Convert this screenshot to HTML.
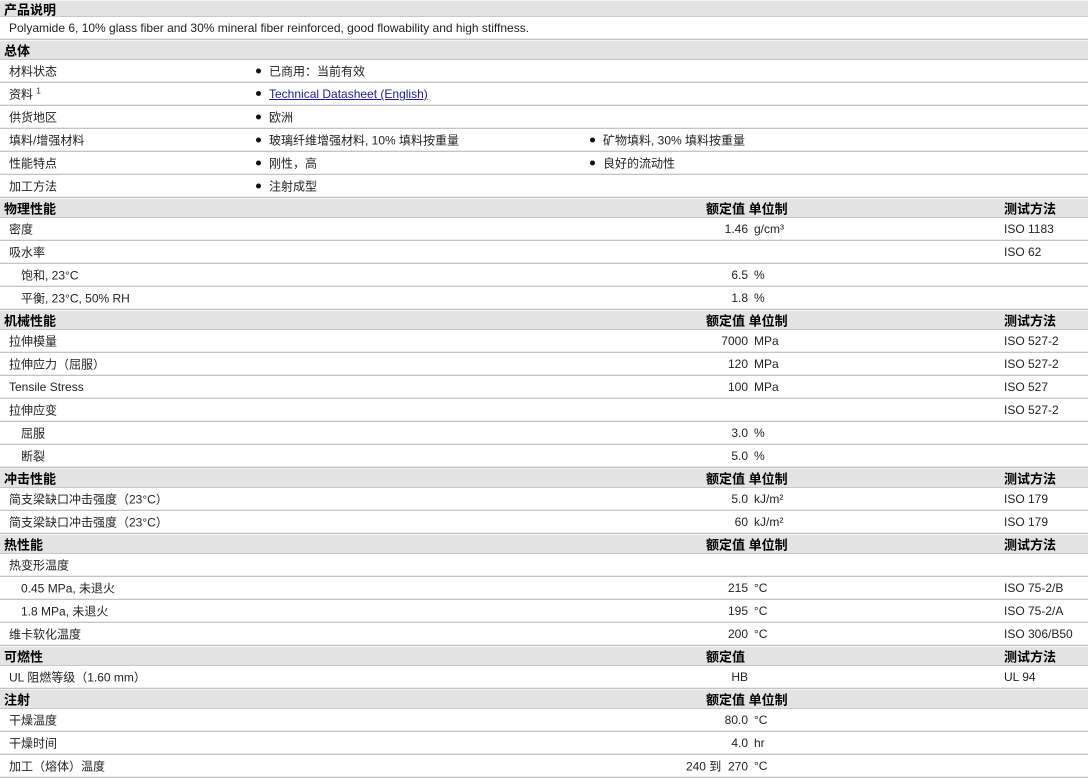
<!DOCTYPE html>
<html><head><meta charset="utf-8"><style>
*{margin:0;padding:0;box-sizing:border-box}
body{width:1088px;height:775px;overflow:hidden;background:#fff;font-family:"Liberation Sans","Noto Sans CJK SC",sans-serif;font-size:12px;color:#222}
.r{position:relative;height:23px;border-bottom:1px solid #c4c4c4;box-shadow:inset 0 -1px 0 #ececec}
.h{position:relative;height:20px;background:#e3e3e3;border-bottom:1px solid #c8c8c8;border-top:1px solid #f4f4f4;font-weight:bold;color:#000;font-size:13px}
.h span,.r span{position:absolute;top:50%;transform:translateY(-50%);white-space:nowrap}
.l{left:9px}.l2{left:21px}.hl{left:4px}
.v{right:340px;text-align:right}
.u{left:754px}
.t{left:1004px}
.b1{left:256px}.b2{left:590px}
.hv{left:706px}.ht{left:1004px}
a{color:#1a1aa6;text-decoration:underline}
.dot{display:inline-block;width:5px;height:5px;border-radius:50%;background:#111;margin-right:8px;vertical-align:middle;position:relative;top:-1px}
</style></head><body>
<div class="h" style="height:17px"><span class="hl">产品说明</span></div>
<div class="r"><span class="l">Polyamide 6, 10% glass fiber and 30% mineral fiber reinforced, good flowability and high stiffness.</span></div>
<div class="h"><span class="hl">总体</span></div>
<div class="r"><span class="l">材料状态</span><span class="b1"><i class="dot"></i>已商用：当前有效</span></div>
<div class="r"><span class="l">资料 <sup style="font-size:8px">1</sup></span><span class="b1"><i class="dot"></i><a>Technical Datasheet (English)</a></span></div>
<div class="r"><span class="l">供货地区</span><span class="b1"><i class="dot"></i>欧洲</span></div>
<div class="r"><span class="l">填料/增强材料</span><span class="b1"><i class="dot"></i>玻璃纤维增强材料, 10% 填料按重量</span><span class="b2"><i class="dot"></i>矿物填料, 30% 填料按重量</span></div>
<div class="r"><span class="l">性能特点</span><span class="b1"><i class="dot"></i>刚性，高</span><span class="b2"><i class="dot"></i>良好的流动性</span></div>
<div class="r"><span class="l">加工方法</span><span class="b1"><i class="dot"></i>注射成型</span></div>

<div class="h"><span class="hl">物理性能</span><span class="hv">额定值 单位制</span><span class="ht">测试方法</span></div>
<div class="r"><span class="l">密度</span><span class="v">1.46</span><span class="u">g/cm³</span><span class="t">ISO 1183</span></div>
<div class="r"><span class="l">吸水率</span><span class="t">ISO 62</span></div>
<div class="r"><span class="l2">饱和, 23°C</span><span class="v">6.5</span><span class="u">%</span></div>
<div class="r"><span class="l2">平衡, 23°C, 50% RH</span><span class="v">1.8</span><span class="u">%</span></div>

<div class="h"><span class="hl">机械性能</span><span class="hv">额定值 单位制</span><span class="ht">测试方法</span></div>
<div class="r"><span class="l">拉伸模量</span><span class="v">7000</span><span class="u">MPa</span><span class="t">ISO 527-2</span></div>
<div class="r"><span class="l">拉伸应力（屈服）</span><span class="v">120</span><span class="u">MPa</span><span class="t">ISO 527-2</span></div>
<div class="r"><span class="l">Tensile Stress</span><span class="v">100</span><span class="u">MPa</span><span class="t">ISO 527</span></div>
<div class="r"><span class="l">拉伸应变</span><span class="t">ISO 527-2</span></div>
<div class="r"><span class="l2">屈服</span><span class="v">3.0</span><span class="u">%</span></div>
<div class="r"><span class="l2">断裂</span><span class="v">5.0</span><span class="u">%</span></div>

<div class="h"><span class="hl">冲击性能</span><span class="hv">额定值 单位制</span><span class="ht">测试方法</span></div>
<div class="r"><span class="l">简支梁缺口冲击强度（23°C）</span><span class="v">5.0</span><span class="u">kJ/m²</span><span class="t">ISO 179</span></div>
<div class="r"><span class="l">简支梁缺口冲击强度（23°C）</span><span class="v">60</span><span class="u">kJ/m²</span><span class="t">ISO 179</span></div>

<div class="h"><span class="hl">热性能</span><span class="hv">额定值 单位制</span><span class="ht">测试方法</span></div>
<div class="r"><span class="l">热变形温度</span></div>
<div class="r"><span class="l2">0.45 MPa, 未退火</span><span class="v">215</span><span class="u">°C</span><span class="t">ISO 75-2/B</span></div>
<div class="r"><span class="l2">1.8 MPa, 未退火</span><span class="v">195</span><span class="u">°C</span><span class="t">ISO 75-2/A</span></div>
<div class="r"><span class="l">维卡软化温度</span><span class="v">200</span><span class="u">°C</span><span class="t">ISO 306/B50</span></div>

<div class="h"><span class="hl">可燃性</span><span class="hv">额定值</span><span class="ht">测试方法</span></div>
<div class="r"><span class="l">UL 阻燃等级（1.60 mm）</span><span class="v">HB</span><span class="t">UL 94</span></div>

<div class="h"><span class="hl">注射</span><span class="hv">额定值 单位制</span></div>
<div class="r"><span class="l">干燥温度</span><span class="v">80.0</span><span class="u">°C</span></div>
<div class="r"><span class="l">干燥时间</span><span class="v">4.0</span><span class="u">hr</span></div>
<div class="r"><span class="l">加工（熔体）温度</span><span class="v">240 到 &nbsp;270</span><span class="u">°C</span></div>
</body></html>
